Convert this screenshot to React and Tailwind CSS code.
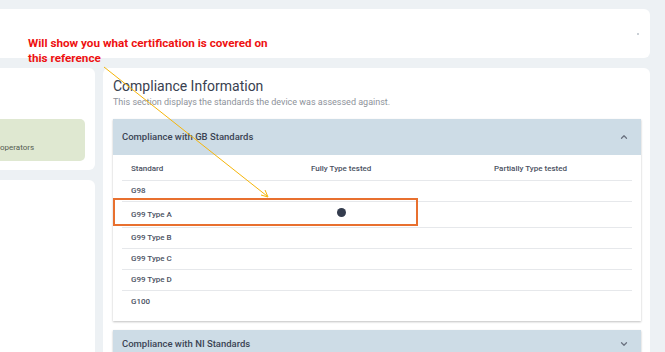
import { ChevronUp, ChevronDown } from "lucide-react";

const rows = [
  { name: "G98", full: false, h: "h-[21px]" },
  { name: "G99 Type A", full: true, h: "h-[26px]" },
  { name: "G99 Type B", full: false, h: "h-[21px]" },
  { name: "G99 Type C", full: false, h: "h-[21px]" },
  { name: "G99 Type D", full: false, h: "h-[21px]" },
  { name: "G100", full: false, h: "h-[22px]", last: true },
];

function Accordion({ title, open, children }) {
  return (
    <div className="shadow-[0_1px_2px_rgba(0,0,0,0.25)]">
      <div
        className={`flex items-center justify-between bg-[#cddce6] pl-[9px] pr-[12px] ${
          open ? "h-[36px]" : "h-[28px]"
        }`}
      >
        <span className="text-[9.5px] font-medium text-[#3b4454]">{title}</span>
        {open ? (
          <ChevronUp className="h-[10px] w-[10px] text-[#6b7280]" strokeWidth={3} />
        ) : (
          <ChevronDown className="h-[10px] w-[10px] text-[#6b7280]" strokeWidth={3} />
        )}
      </div>
      {open && <div className="bg-white">{children}</div>}
    </div>
  );
}

export default function App() {
  return (
    <div className="relative h-[352px] w-[665px] overflow-hidden bg-[#edf1f4] font-['Roboto',sans-serif]">
      {/* top card */}
      <div className="pt-[9px] pr-[15px]">
        <div className="flex h-[49px] items-center justify-end rounded-r-[6px] bg-white pr-[11px]">
          <span className="h-[2px] w-[2px] rounded-full bg-[#b8c0c8]" />
        </div>
      </div>

      <div className="flex gap-[8px] pt-[10px] pr-[15px]">
        {/* left column */}
        <div className="flex w-[95px] flex-col gap-[10px]">
          <div className="h-[102px] rounded-r-[6px] bg-white pt-[51px] pr-[10px]">
            <div className="h-[42px] rounded-r-[5px] bg-[#dfe8d1] pt-[23px] text-[8px] text-[#555c52]">
              operators
            </div>
          </div>
          <div className="h-[190px] rounded-tr-[6px] bg-white" />
        </div>

        {/* main card */}
        <div className="h-[300px] flex-1 rounded-t-[6px] bg-white pt-[8px] pl-[10px] pr-[9px]">
          <h2 className="text-[14px] leading-[20px] text-[#394150]">Compliance Information</h2>
          <p className="text-[9px] leading-[12px] text-[#8d929a]">
            This section displays the standards the device was assessed against.
          </p>

          <div className="mt-[11px] flex flex-col gap-[9px]">
            <Accordion title="Compliance with GB Standards" open>
              <div className="px-[9px] pt-[3px] pb-[8px] text-[8px] font-medium text-[#4a5162]">
                <div className="grid h-[23px] grid-cols-[180px_183px_1fr] items-center border-b border-[#e6e8eb]">
                  <span className="pl-[9px]">Standard</span>
                  <span className="pl-[9px]">Fully Type tested</span>
                  <span className="pl-[9px]">Partially Type tested</span>
                </div>
                {rows.map((r) => (
                  <div
                    key={r.name}
                    className={`grid grid-cols-[180px_183px_1fr] items-center ${r.h} ${
                      r.last ? "" : "border-b border-[#e6e8eb]"
                    }`}
                  >
                    <span className="pl-[9px]">{r.name}</span>
                    <span className="pl-[35px]">
                      {r.full && (
                        <span className="relative -top-[2px] block h-[9px] w-[9px] rounded-full bg-[#343c4e]" />
                      )}
                    </span>
                    <span />
                  </div>
                ))}
              </div>
            </Accordion>
            <Accordion title="Compliance with NI Standards" open={false} />
          </div>
        </div>
      </div>

      {/* annotation */}
      <div className="absolute left-[28px] top-[36px] text-[11.7px] font-bold leading-[14.5px] text-[#ee1111]">
        <p>Will show you what certification is covered on</p>
        <p>this reference</p>
      </div>
      <div className="absolute left-[113px] top-[198px] h-[28px] w-[305px] border-2 border-[#e8702f]" />
      <svg className="absolute left-0 top-0" width="665" height="352" viewBox="0 0 665 352">
        <line x1="104" y1="67" x2="267" y2="196" stroke="#f5b50a" strokeWidth="1" />
        <polyline points="261,195 268,197 265,190" fill="none" stroke="#f5b50a" strokeWidth="1" />
      </svg>
    </div>
  );
}
